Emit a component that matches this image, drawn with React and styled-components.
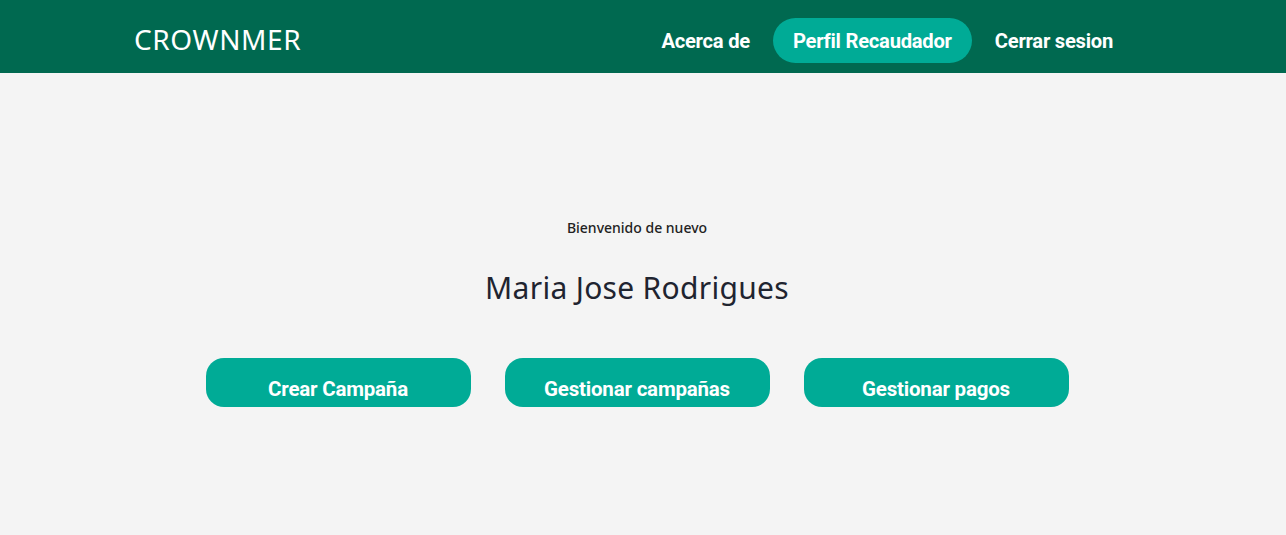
import React from "react";
import styled, { createGlobalStyle } from "styled-components";

const Global = createGlobalStyle`
  html, body { margin: 0; padding: 0; background: #f4f4f4; }
  body { font-family: "Noto Sans", "Open Sans", sans-serif; }
`;

const Header = styled.header`
  height: 73px;
  background: #006950;
  display: flex;
  align-items: center;
  justify-content: space-between;
  padding: 8px 150px 0 134px;
  box-sizing: border-box;
`;

const Logo = styled.div`
  color: #ffffff;
  font-family: "Noto Sans", sans-serif;
  font-size: 28px;
  letter-spacing: 0.6px;
  font-weight: 400;
  margin-top: -3px;
`;

const Nav = styled.nav`
  display: flex;
  align-items: center;
`;

const NavItem = styled.a`
  color: #ffffff;
  font-family: Roboto, sans-serif;
  font-weight: 700;
  font-size: 20.2px;
  letter-spacing: -0.25px;
  height: 45px;
  display: flex;
  align-items: center;
  padding: 0 ${(p) => (p.$active ? "20px" : "23px")};
  border-radius: 23px;
  background: ${(p) => (p.$active ? "#00ab96" : "transparent")};
  text-decoration: none;
  cursor: pointer;
`;

const Main = styled.main`
  display: flex;
  flex-direction: column;
  align-items: center;
  padding: 145px 12px 0 0;
  min-height: 462px;
  box-sizing: border-box;
`;

const Welcome = styled.p`
  margin: 0;
  font-size: 14px;
  font-weight: 500;
  color: #222;
  line-height: 20px;
`;

const Name = styled.h1`
  margin: 30px 0 0;
  font-size: 30px;
  font-weight: 400;
  color: #1f2430;
  line-height: 40px;
  letter-spacing: 0.3px;
`;

const Actions = styled.div`
  display: flex;
  gap: 34px;
  margin-top: 50px;
`;

const ActionButton = styled.button`
  width: 265px;
  height: 49px;
  border: none;
  border-radius: 18px;
  background: #00ab96;
  color: #fff;
  font-family: Roboto, sans-serif;
  font-weight: 700;
  font-size: 20.5px;
  letter-spacing: -0.2px;
  padding-top: 13px;
  cursor: pointer;
`;

export default function App() {
  return (
    <>
      <Global />
      <Header>
        <Logo>CROWNMER</Logo>
        <Nav>
          <NavItem>Acerca de</NavItem>
          <NavItem $active>Perfil Recaudador</NavItem>
          <NavItem>Cerrar sesion</NavItem>
        </Nav>
      </Header>
      <Main>
        <Welcome>Bienvenido de nuevo</Welcome>
        <Name>Maria Jose Rodrigues</Name>
        <Actions>
          <ActionButton>Crear Campaña</ActionButton>
          <ActionButton>Gestionar campañas</ActionButton>
          <ActionButton>Gestionar pagos</ActionButton>
        </Actions>
      </Main>
    </>
  );
}
